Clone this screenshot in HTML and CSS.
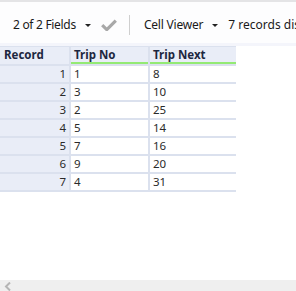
FILE: index.html
```html
<!DOCTYPE html>
<html>
<head>
<meta charset="utf-8">
<link rel="stylesheet" href="styles.css">
</head>
<body>
<div class="app">
  <div class="toolbar">
    <span class="tb-text fields">2 of 2 Fields</span>
    <span class="caret"></span>
    <svg class="check" width="16" height="12" viewBox="0 0 16 12"><path d="M1.2 6.2 L5.8 10.6 L14.8 1.6" fill="none" stroke="#a8a8a8" stroke-width="3.2" stroke-linejoin="miter"/></svg>
    <span class="sep"></span>
    <span class="tb-text viewer">Cell Viewer</span>
    <span class="caret"></span>
    <span class="tb-text records">7 records displayed</span>
  </div>
  <div class="band"></div>
  <div class="grid">
    <div class="hd rec">Record</div>
    <div class="hd fld">Trip No</div>
    <div class="hd fld">Trip Next</div>

    <div class="rn">1</div><div class="c">1</div><div class="c">8</div>
    <div class="rn">2</div><div class="c">3</div><div class="c">10</div>
    <div class="rn">3</div><div class="c">2</div><div class="c">25</div>
    <div class="rn">4</div><div class="c">5</div><div class="c">14</div>
    <div class="rn">5</div><div class="c">7</div><div class="c">16</div>
    <div class="rn">6</div><div class="c">9</div><div class="c">20</div>
    <div class="rn">7</div><div class="c">4</div><div class="c">31</div>
  </div>
  <div class="spacer"></div>
  <div class="hscroll">
    <svg class="arrow" width="8" height="9" viewBox="0 0 8 9"><path d="M6 0.5 L2 4.5 L6 8.5" fill="none" stroke="#b5b5b5" stroke-width="2"/></svg>
  </div>
</div>
</body>
</html>
```
FILE: styles.css
```css
html, body {
  margin: 0;
  padding: 0;
  background: #ffffff;
}
body {
  width: 296px;
  height: 291px;
  overflow: hidden;
  font-family: "Noto Sans", "Open Sans", sans-serif;
  font-size: 11.5px;
  color: #1e1e1e;
}
.app {
  display: flex;
  flex-direction: column;
  height: 291px;
}
.toolbar {
  height: 36px;
  padding-top: 5px;
  border-top: 2px solid #e4e4e6;
  background: #fdfdfe;
  display: flex;
  align-items: center;
  padding-left: 13px;
  white-space: nowrap;
  overflow: hidden;
}
.toolbar > * {
  flex: none;
}
.tb-text {
  line-height: 16px;
  color: #1a1a1a;
  font-size: 12px;
}
.fields {
  letter-spacing: -0.3px;
}
.caret {
  width: 0;
  height: 0;
  border-left: 3px solid transparent;
  border-right: 3px solid transparent;
  border-top: 3px solid #222;
  margin-left: 9px;
  margin-top: 1px;
}
.check {
  margin-left: 10px;
  display: block;
}
.sep {
  width: 1px;
  height: 20px;
  background: #cfcfcf;
  margin-left: 12px;
}
.viewer {
  margin-left: 14px;
  letter-spacing: -0.2px;
}
.records {
  margin-left: 10px;
}
.band {
  height: 3px;
  background: #f4f5fb;
}
.grid {
  display: grid;
  grid-template-columns: 69px 77px 86px;
  gap: 2px;
  padding: 1px 2px 2px 0;
  background: #dbe1ee;
  width: 234px;
}
.hd {
  background: #e9edf7;
  height: 15px;
  line-height: 15px;
  font-weight: bold;
  color: #1d2740;
  padding-left: 3px;
}
.hd.rec {
  padding-left: 4px;
  height: 17px;
}
.hd.fld {
  border-bottom: 2px solid #94ea74;
}
.rn {
  background: #e9edf7;
  height: 16px;
  line-height: 16px;
  text-align: right;
  padding-right: 3px;
  color: #2a2a2a;
}
.c {
  background: #ffffff;
  height: 16px;
  line-height: 16px;
  padding-left: 3px;
  color: #2a2a2a;
}
.spacer {
  flex: 1;
}
.hscroll {
  height: 11px;
  background: #efefef;
  position: relative;
}
.arrow {
  position: absolute;
  left: 4px;
  top: 2px;
  display: block;
}
```
